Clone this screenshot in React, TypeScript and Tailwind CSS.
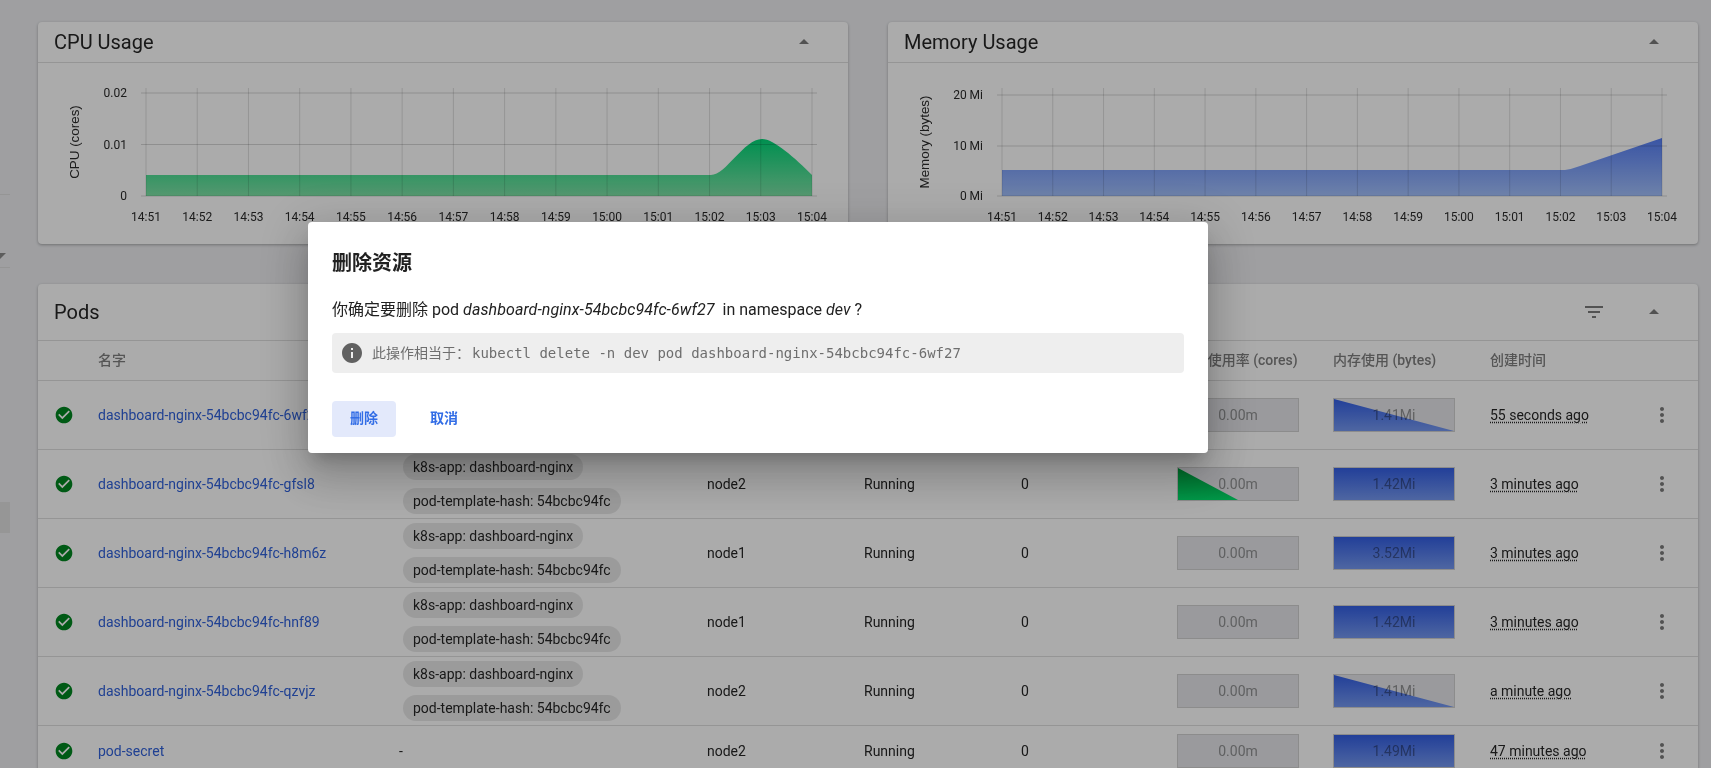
const FONT = { fontFamily: "Roboto, 'Noto Sans CJK SC', sans-serif" };

const TICKS = ["14:51", "14:52", "14:53", "14:54", "14:55", "14:56", "14:57", "14:58", "14:59", "15:00", "15:01", "15:02", "15:03", "15:04"];

type Bar = "full" | "half" | "none";

const PODS: {
  name: string;
  labels: boolean;
  node: string;
  cpuBar: Bar;
  mem: string;
  memBar: Bar;
  created: string;
  short?: boolean;
}[] = [
  { name: "dashboard-nginx-54bcbc94fc-6wf27", labels: true, node: "node2", cpuBar: "none", mem: "1.41Mi", memBar: "half", created: "55 seconds ago" },
  { name: "dashboard-nginx-54bcbc94fc-gfsl8", labels: true, node: "node2", cpuBar: "half", mem: "1.42Mi", memBar: "full", created: "3 minutes ago" },
  { name: "dashboard-nginx-54bcbc94fc-h8m6z", labels: true, node: "node1", cpuBar: "none", mem: "3.52Mi", memBar: "full", created: "3 minutes ago" },
  { name: "dashboard-nginx-54bcbc94fc-hnf89", labels: true, node: "node1", cpuBar: "none", mem: "1.42Mi", memBar: "full", created: "3 minutes ago" },
  { name: "dashboard-nginx-54bcbc94fc-qzvjz", labels: true, node: "node2", cpuBar: "none", mem: "1.41Mi", memBar: "half", created: "a minute ago" },
  { name: "pod-secret", labels: false, node: "node2", cpuBar: "none", mem: "1.49Mi", memBar: "full", created: "47 minutes ago", short: true },
];

function ArrowUp() {
  return (
    <svg viewBox="0 0 24 24" className="h-6 w-6 fill-[#7a7a7a]">
      <path d="m7 14 5-5 5 5z" />
    </svg>
  );
}

function Chart({
  viewBox,
  left,
  right,
  hLines,
  area,
  gradient,
  axis,
  axisX,
  labelX,
}: {
  viewBox: string;
  left: number;
  right: number;
  hLines: { y: number; label: string }[];
  area: string;
  gradient: [string, string, number];
  axis: string;
  axisX: number;
  labelX: number;
}) {
  const step = (right - left) / 13;
  const id = `area-${left}`;
  return (
    <svg viewBox={viewBox} className="h-full w-full">
      <defs>
        <linearGradient id={id} gradientUnits="userSpaceOnUse" x1="0" x2="0" y1={gradient[2]} y2="196">
          <stop offset="0" stopColor={gradient[0]} />
          <stop offset="1" stopColor={gradient[1]} />
        </linearGradient>
      </defs>
      <path d={area} fill={`url(#${id})`} />
      {hLines.map((l) => (
        <g key={l.label}>
          <line x1={left - 5} x2={right + 5} y1={l.y} y2={l.y} stroke="#000" strokeOpacity="0.16" />
          <text x={labelX} y={l.y + 4} textAnchor="end" fontSize="12" fill="#2a2a2a" style={FONT}>
            {l.label}
          </text>
        </g>
      ))}
      {TICKS.map((t, i) => (
        <g key={t}>
          <line x1={left + i * step} x2={left + i * step} y1="88" y2="196" stroke="#000" strokeOpacity="0.13" />
          <text x={left + i * step} y="221" textAnchor="middle" fontSize="12" fill="#2a2a2a" style={FONT}>
            {t}
          </text>
        </g>
      ))}
      <text
        x={axisX}
        y="142"
        textAnchor="middle"
        fontSize="13.4"
        fill="#2a2a2a"
        transform={`rotate(-90 ${axisX} 142)`}
        dominantBaseline="central"
        style={{ fontFamily: "'Liberation Sans', sans-serif" }}
      >
        {axis}
      </text>
    </svg>
  );
}

function GraphCard({ title, children }: { title: string; children: React.ReactNode }) {
  return (
    <section className="flex h-[222px] flex-col rounded bg-[#fcfcfc] shadow-[0_1px_3px_rgba(0,0,0,0.3)]">
      <header className="flex h-[41px] shrink-0 items-center justify-between border-b border-[#dcdcdc] pl-4 pr-8">
        <h2 className="text-[20px] text-[#262626]">{title}</h2>
        <ArrowUp />
      </header>
      <div className="min-h-0 flex-1">{children}</div>
    </section>
  );
}

function UsageBar({ value, bar, kind }: { value: string; bar: Bar; kind: "cpu" | "mem" }) {
  const id = `${kind}-${value}-${bar}`;
  const colors = kind === "mem" ? ["#335ee2", "#7497ee"] : ["#009a3c", "#00e06c"];
  const points = kind === "mem" ? "0,0 100,100 0,100" : "0,0 50,100 0,100";
  return (
    <div className="relative flex h-[34px] w-[122px] items-center justify-center border border-[#cecece] bg-[#e3e4e7]">
      {bar !== "none" && (
        <svg viewBox="0 0 100 100" preserveAspectRatio="none" className="absolute inset-0 h-full w-full">
          <defs>
            <linearGradient id={id} x1="0" x2="0" y1="0" y2="1">
              <stop offset="0" stopColor={colors[0]} />
              <stop offset="1" stopColor={colors[1]} />
            </linearGradient>
          </defs>
          <polygon points={bar === "full" ? "0,0 100,0 100,100 0,100" : points} fill={`url(#${id})`} />
        </svg>
      )}
      <span className="relative text-sm text-[#a0a0a0] mix-blend-multiply">{value}</span>
    </div>
  );
}

function PodRow({ pod }: { pod: (typeof PODS)[number] }) {
  return (
    <div
      className={`grid grid-cols-[60px_305px_304px_157px_157px_156px_156px_157px_1fr] items-center border-b border-[#dcdcdc] text-sm text-[#262626] ${
        pod.short ? "h-[50px]" : "h-[69px]"
      }`}
    >
      <div className="flex pl-4">
        <svg viewBox="0 0 24 24" className="h-5 w-5 fill-[#00851f]">
          <path d="M12 2C6.48 2 2 6.48 2 12s4.48 10 10 10 10-4.48 10-10S17.52 2 12 2zm-2 15l-5-5 1.41-1.41L10 14.17l7.59-7.59L19 8l-9 9z" />
        </svg>
      </div>
      <a className="text-[#3060d8]">{pod.name}</a>
      {pod.labels ? (
        <div className="flex flex-col items-start gap-2">
          <span className="flex h-[26px] items-center rounded-full bg-[#e5e5e5] px-2.5">k8s-app: dashboard-nginx</span>
          <span className="flex h-[26px] items-center rounded-full bg-[#e5e5e5] px-2.5">pod-template-hash: 54bcbc94fc</span>
        </div>
      ) : (
        <span className="-ml-[4px]">-</span>
      )}
      <span>{pod.node}</span>
      <span>Running</span>
      <span>0</span>
      <UsageBar value="0.00m" bar={pod.cpuBar} kind="cpu" />
      <UsageBar value={pod.mem} bar={pod.memBar} kind="mem" />
      <div className="flex items-center justify-between pr-6">
        <span className="underline decoration-dotted underline-offset-2">{pod.created}</span>
        <svg viewBox="0 0 24 24" className="h-6 w-6 fill-[#7a7a7a]">
          <path d="M12 8c1.1 0 2-.9 2-2s-.9-2-2-2-2 .9-2 2 .9 2 2 2zm0 2c-1.1 0-2 .9-2 2s.9 2 2 2 2-.9 2-2-.9-2-2-2zm0 6c-1.1 0-2 .9-2 2s.9 2 2 2 2-.9 2-2-.9-2-2-2z" />
        </svg>
      </div>
    </div>
  );
}

export default function App() {
  return (
    <div className="relative flex h-[768px] overflow-hidden bg-[#eaebee]" style={FONT}>
      <aside className="w-[10px] shrink-0">
        <div className="mt-[194px] h-px bg-[#dcdcdc]" />
        <div className="mt-[58px] h-0 w-0 border-x-[6px] border-t-[6px] border-x-transparent border-t-[#8a8a8a] -ml-[6px]" />
        <div className="mt-[8px] h-px bg-[#dcdcdc]" />
        <div className="mt-[234px] h-[31px] bg-[#dedede]" />
      </aside>

      <main className="min-w-0 flex-1 pl-[28px] pr-[13px] pt-[22px]">
        <div className="grid grid-cols-2 gap-10">
          <GraphCard title="CPU Usage">
            <Chart
              viewBox="38 63 810 181"
              left={146}
              right={812}
              hLines={[
                { y: 93, label: "0.02" },
                { y: 144.5, label: "0.01" },
                { y: 196, label: "0" },
              ]}
              area="M146,196 L146,175 L711,175 C726,175 744,139 762,139 C774,139 795,158 812,175 L812,196 Z"
              gradient={["#00d476", "#7ee0a5", 139]}
              axis="CPU (cores)"
              axisX={74}
              labelX={127}
            />
          </GraphCard>
          <GraphCard title="Memory Usage">
            <Chart
              viewBox="888 63 810 181"
              left={1002}
              right={1662}
              hLines={[
                { y: 95, label: "20 Mi" },
                { y: 146, label: "10 Mi" },
                { y: 196, label: "0 Mi" },
              ]}
              area="M1002,196 L1002,170 L1565,170 Q1572,169 1580,166 L1662,138 L1662,196 Z"
              gradient={["#557df3", "#a2bffa", 138]}
              axis="Memory (bytes)"
              axisX={924}
              labelX={983}
            />
          </GraphCard>
        </div>

        <section className="mt-10 rounded bg-[#fcfcfc] shadow-[0_1px_3px_rgba(0,0,0,0.3)]">
          <header className="flex h-[57px] items-center justify-between border-b border-[#dcdcdc] pl-4 pr-8">
            <h2 className="text-[20px] text-[#262626]">Pods</h2>
            <div className="flex items-center gap-9">
              <svg viewBox="0 0 24 24" className="h-6 w-6 fill-[#7a7a7a]">
                <path d="M10 18h4v-2h-4v2zM3 6v2h18V6H3zm3 7h12v-2H6v2z" />
              </svg>
              <ArrowUp />
            </div>
          </header>
          <div className="grid h-10 grid-cols-[60px_305px_304px_157px_157px_156px_156px_157px_1fr] items-center border-b border-[#dcdcdc] pb-0.5 text-sm font-medium text-[#7e7e7e]">
            <span />
            <span>名字</span>
            <span />
            <span />
            <span />
            <span />
            <span>CPU 使用率 (cores)</span>
            <span>内存使用 (bytes)</span>
            <span>创建时间</span>
          </div>
          {PODS.map((pod) => (
            <PodRow key={pod.name} pod={pod} />
          ))}
        </section>
      </main>

      {/* backdrop + confirm dialog */}
      <div className="absolute inset-0 bg-[rgba(0,0,0,0.32)]" />
      <div className="absolute left-[308px] top-[222px] w-[900px] rounded bg-white px-6 pb-4 pt-[25px] shadow-[0_11px_15px_-7px_rgba(0,0,0,0.2),0_24px_38px_3px_rgba(0,0,0,0.14),0_9px_46px_8px_rgba(0,0,0,0.12)]">
        <h2 className="text-[20px] font-bold leading-8 text-[#212121]">删除资源</h2>
        <p className="mt-[19px] text-base leading-6 text-[#212121]">
          你确定要删除 pod <i className="tracking-[0.005em]">dashboard-nginx-54bcbc94fc-6wf27</i>&nbsp; in namespace <i>dev</i> ?
        </p>
        <div className="mt-[11px] flex h-10 items-center rounded-sm bg-[#eeeeee] pl-2 text-sm text-[#6e6e6e]">
          <svg viewBox="0 0 24 24" className="h-6 w-6 fill-[#616161]">
            <path d="M12 2C6.48 2 2 6.48 2 12s4.48 10 10 10 10-4.48 10-10S17.52 2 12 2zm1 15h-2v-6h2v6zm0-8h-2V7h2v2z" />
          </svg>
          <span className="ml-2 mr-0.5">此操作相当于：</span>
          <code style={{ fontFamily: "'DejaVu Sans Mono', monospace" }}>
            kubectl delete -n dev pod dashboard-nginx-54bcbc94fc-6wf27
          </code>
        </div>
        <div className="mt-7 flex gap-4">
          <button className="h-9 w-16 rounded bg-[#e3e9fb] pb-0.5 text-sm font-bold text-[#326de6]">删除</button>
          <button className="h-9 w-16 rounded pb-0.5 text-sm font-bold text-[#326de6]">取消</button>
        </div>
      </div>
    </div>
  );
}
